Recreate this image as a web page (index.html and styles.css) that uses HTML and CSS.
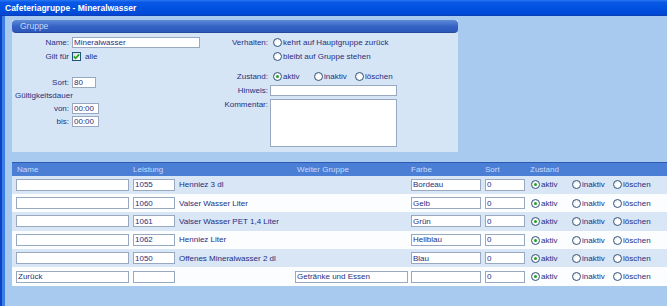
FILE: index.html
```html
<!DOCTYPE html>
<html lang="de">
<head>
    <meta charset="UTF-8">
    <title>Cafeteriagruppe - Mineralwasser</title>
    <link rel="stylesheet" href="styles.css">
</head>
<body>
    <div class="titlebar">Cafeteriagruppe - Mineralwasser</div>

    <div class="frame">
        <!-- Gruppe -->
        <section class="panel">
            <div class="panel-head">Gruppe</div>
            <div class="panel-body">
                <div class="col-left">
                    <div class="row">
                        <span class="lbl">Name:</span>
                        <input class="field f-name" type="text" value="Mineralwasser">
                    </div>
                    <div class="row">
                        <span class="lbl">Gilt für</span>
                        <span class="check"><svg viewBox="0 0 9 9" width="9" height="9"><path d="M1.8 4.4 L3.6 6.3 L7.2 2.4" fill="none" stroke="#21a121" stroke-width="1.6"/></svg></span>
                        <span class="check-text">alle</span>
                    </div>
                    <div class="row row-sort">
                        <span class="lbl">Sort:</span>
                        <input class="field f-sort" type="text" value="80">
                    </div>
                    <div class="row row-small sub-title">Gültigkeitsdauer</div>
                    <div class="row row-small">
                        <span class="lbl">von:</span>
                        <input class="field f-time" type="text" value="00:00">
                    </div>
                    <div class="row row-small">
                        <span class="lbl">bis:</span>
                        <input class="field f-time" type="text" value="00:00">
                    </div>
                </div>

                <div class="col-right">
                    <div class="row">
                        <span class="lbl">Verhalten:</span>
                        <label class="opt wide"><span class="radio"></span>kehrt auf Hauptgruppe zurück</label>
                    </div>
                    <div class="row">
                        <span class="lbl"></span>
                        <label class="opt wide"><span class="radio"></span>bleibt auf Gruppe stehen</label>
                    </div>
                    <div class="row row-state">
                        <span class="lbl">Zustand:</span>
                        <label class="opt"><span class="radio on"></span>aktiv</label>
                        <label class="opt"><span class="radio"></span>inaktiv</label>
                        <label class="opt"><span class="radio"></span>löschen</label>
                    </div>
                    <div class="row">
                        <span class="lbl">Hinweis:</span>
                        <input class="field f-note" type="text" value="">
                    </div>
                    <div class="row row-top">
                        <span class="lbl">Kommentar:</span>
                        <textarea class="field f-comment"></textarea>
                    </div>
                </div>
            </div>
        </section>

        <!-- Liste -->
        <table class="list">
            <colgroup>
                <col class="c-name">
                <col class="c-leistung">
                <col class="c-weiter">
                <col class="c-farbe">
                <col class="c-sort">
                <col>
            </colgroup>
            <thead>
                <tr>
                    <th class="h-name">Name</th>
                    <th>Leistung</th>
                    <th class="h-weiter">Weiter Gruppe</th>
                    <th>Farbe</th>
                    <th>Sort</th>
                    <th>Zustand</th>
                </tr>
            </thead>
            <tbody>
                <tr>
                    <td><input class="field t-name" type="text" value=""></td>
                    <td><input class="field t-nr" type="text" value="1055"><span class="t-text">Henniez 3 dl</span></td>
                    <td></td>
                    <td><input class="field t-farbe" type="text" value="Bordeau"></td>
                    <td><input class="field t-sort" type="text" value="0"></td>
                    <td><label class="opt"><span class="radio on"></span>aktiv</label><label class="opt"><span class="radio"></span>inaktiv</label><label class="opt"><span class="radio"></span>löschen</label></td>
                </tr>
                <tr>
                    <td><input class="field t-name" type="text" value=""></td>
                    <td><input class="field t-nr" type="text" value="1060"><span class="t-text">Valser Wasser Liter</span></td>
                    <td></td>
                    <td><input class="field t-farbe" type="text" value="Gelb"></td>
                    <td><input class="field t-sort" type="text" value="0"></td>
                    <td><label class="opt"><span class="radio on"></span>aktiv</label><label class="opt"><span class="radio"></span>inaktiv</label><label class="opt"><span class="radio"></span>löschen</label></td>
                </tr>
                <tr>
                    <td><input class="field t-name" type="text" value=""></td>
                    <td><input class="field t-nr" type="text" value="1061"><span class="t-text">Valser Wasser PET 1,4 Liter</span></td>
                    <td></td>
                    <td><input class="field t-farbe" type="text" value="Grün"></td>
                    <td><input class="field t-sort" type="text" value="0"></td>
                    <td><label class="opt"><span class="radio on"></span>aktiv</label><label class="opt"><span class="radio"></span>inaktiv</label><label class="opt"><span class="radio"></span>löschen</label></td>
                </tr>
                <tr>
                    <td><input class="field t-name" type="text" value=""></td>
                    <td><input class="field t-nr" type="text" value="1062"><span class="t-text">Henniez Liter</span></td>
                    <td></td>
                    <td><input class="field t-farbe" type="text" value="Hellblau"></td>
                    <td><input class="field t-sort" type="text" value="0"></td>
                    <td><label class="opt"><span class="radio on"></span>aktiv</label><label class="opt"><span class="radio"></span>inaktiv</label><label class="opt"><span class="radio"></span>löschen</label></td>
                </tr>
                <tr>
                    <td><input class="field t-name" type="text" value=""></td>
                    <td><input class="field t-nr" type="text" value="1050"><span class="t-text">Offenes Mineralwasser 2 dl</span></td>
                    <td></td>
                    <td><input class="field t-farbe" type="text" value="Blau"></td>
                    <td><input class="field t-sort" type="text" value="0"></td>
                    <td><label class="opt"><span class="radio on"></span>aktiv</label><label class="opt"><span class="radio"></span>inaktiv</label><label class="opt"><span class="radio"></span>löschen</label></td>
                </tr>
                <tr>
                    <td><input class="field t-name" type="text" value="Zurück"></td>
                    <td><input class="field t-nr" type="text" value=""></td>
                    <td><input class="field t-weiter" type="text" value="Getränke und Essen"></td>
                    <td><input class="field t-farbe" type="text" value=""></td>
                    <td><input class="field t-sort" type="text" value="0"></td>
                    <td><label class="opt"><span class="radio on"></span>aktiv</label><label class="opt"><span class="radio"></span>inaktiv</label><label class="opt"><span class="radio"></span>löschen</label></td>
                </tr>
            </tbody>
        </table>
    </div>
</body>
</html>
```

FILE: styles.css
```css
:root {
    --color-frame: #a8caef;
    --color-panel: #d6e5f6;
    --color-text: #1f2f80;
    --color-field-border: #98a8c0;
}

* {
    margin: 0;
    padding: 0;
    box-sizing: border-box;
}

body {
    font-family: "Liberation Sans", Arial, sans-serif;
    font-size: 8px;
    color: var(--color-text);
    background-color: var(--color-frame);
    overflow: hidden;
}

/* Title bar */
.titlebar {
    height: 16px;
    line-height: 16px;
    padding-left: 5px;
    color: #ffffff;
    font-size: 8.5px;
    font-weight: bold;
    background: linear-gradient(#2a78f4 0, #0a58e6 15%, #0050e0 60%, #0046d2 100%);
    border-bottom: 1px solid #0a3fb8;
}

.frame {
    height: 290px;
    padding: 4px 0 0 10px;
    border-left: 2px solid #0a44c6;
    box-shadow: inset 3px 0 0 #3d7de6;
}

/* Group panel */
.panel {
    width: 446px;
    height: 132px;
    background-color: var(--color-panel);
}

.panel-head {
    height: 13px;
    line-height: 13px;
    padding-left: 8px;
    border-radius: 4px;
    color: #c6d8fa;
    font-size: 8.5px;
    background: linear-gradient(#5e8ad8, #3462c4 55%, #2c58ba);
    border-bottom: 1px solid #234a9e;
}

.panel-body {
    display: flex;
    padding-top: 2px;
}

.col-left {
    width: 188px;
}

.row {
    display: flex;
    align-items: center;
    height: 14px;
}

.row-small {
    height: 13px;
}

.row-sort {
    margin-top: 12px;
}

.row-state {
    margin-top: 6px;
}

.row-top {
    align-items: flex-start;
    height: auto;
    margin-top: 2px;
}

.lbl {
    width: 57px;
    margin-right: 3px;
    text-align: right;
    white-space: nowrap;
}

.col-right .lbl {
    width: 68px;
    margin-right: 2px;
}

.row-top .lbl {
    padding-top: 1px;
}

.sub-title {
    padding-left: 3px;
}

/* Fields */
.field {
    height: 11px;
    padding: 0 1px;
    border: 1px solid var(--color-field-border);
    background-color: #ffffff;
    font: inherit;
    color: inherit;
    outline: none;
}

.f-name { width: 128px; }
.f-sort { width: 24px; }
.f-time { width: 27px; }
.f-note { width: 127px; }

.f-comment {
    width: 127px;
    height: 48px;
    resize: none;
}

.check {
    display: inline-flex;
    width: 9px;
    height: 9px;
    margin: 0 4px 0 0;
    border: 1px solid #1c5180;
    background: linear-gradient(135deg, #dcdcd6, #ffffff);
}

.check svg {
    margin: -1px;
}

/* Radio options */
.opt {
    display: inline-flex;
    align-items: center;
    width: 41px;
    white-space: nowrap;
}

.opt.wide {
    width: auto;
}

.radio {
    position: relative;
    display: inline-block;
    flex: none;
    width: 9px;
    height: 9px;
    margin: 0 1px 0 3px;
    border: 1px solid #35557f;
    border-radius: 50%;
    background: radial-gradient(circle at 60% 60%, #ffffff 30%, #dcdcd4 100%);
}

.radio.on::after {
    content: "";
    position: absolute;
    top: 2px;
    left: 2px;
    width: 3px;
    height: 3px;
    border-radius: 50%;
    background-color: #21a121;
}

/* List table */
.list {
    width: 655px;
    margin-top: 10px;
    border-collapse: collapse;
    table-layout: fixed;
}

.c-name { width: 119px; }
.c-leistung { width: 162px; }
.c-weiter { width: 116px; }
.c-farbe { width: 74px; }
.c-sort { width: 45px; }

.list th {
    height: 13px;
    padding-left: 2px;
    text-align: left;
    font-weight: normal;
    color: #c8dcfc;
    background-color: #4b7fd6;
    border-top: 1px solid #2c5ab4;
}

.list th.h-name { padding-left: 5px; }
.list th.h-weiter { padding-left: 4px; }

.list td {
    height: 18.4px;
    padding-left: 2px;
    white-space: nowrap;
}

.list td:first-child {
    padding-left: 4px;
}

.list td:last-child {
    padding-left: 0;
}

.list tbody tr:nth-child(odd) {
    background-color: #d8e6f6;
}

.list tbody tr:nth-child(even) {
    background-color: #fbfdff;
}

.list .field {
    height: 12px;
    vertical-align: middle;
}

.t-name { width: 113px; }
.t-nr { width: 42px; }
.t-weiter { width: 113px; }
.t-farbe { width: 70px; }
.t-sort { width: 40px; }

.t-text {
    margin-left: 4px;
    vertical-align: middle;
}

.list .opt {
    vertical-align: middle;
}
```
